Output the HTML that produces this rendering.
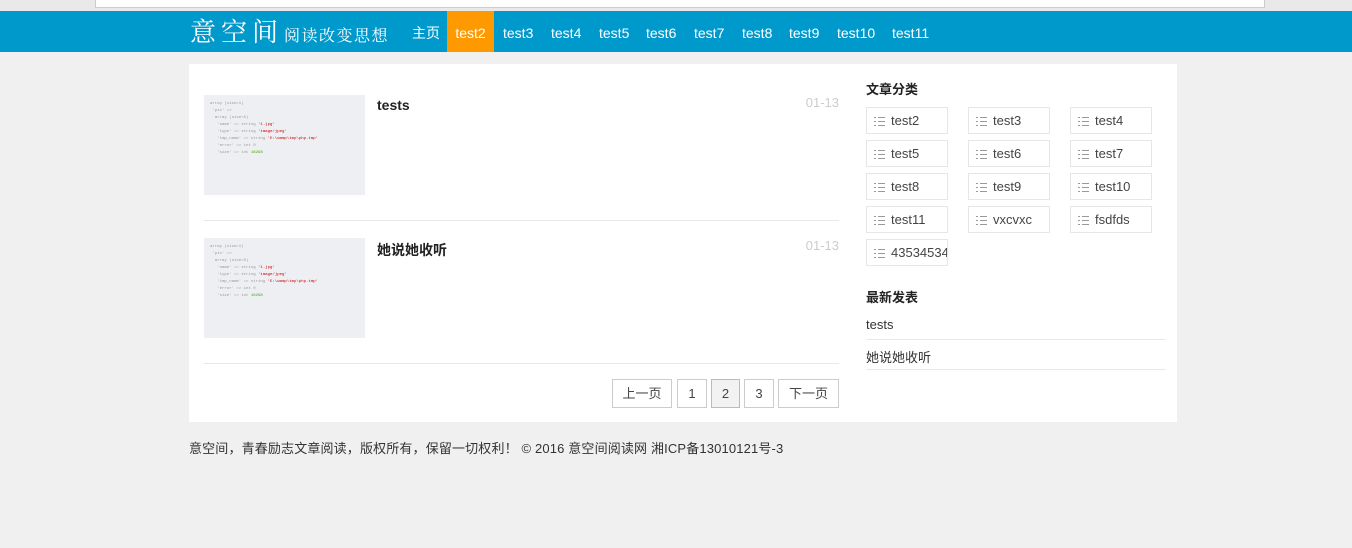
<!DOCTYPE html>
<html><head><meta charset="utf-8"><style>
*{margin:0;padding:0;box-sizing:border-box}
body{width:1352px;height:548px;background:#f0f0f0;font-family:"Liberation Sans","Noto Sans CJK SC",sans-serif;font-size:13px;color:#333;position:relative;overflow:hidden}
.abs{position:absolute}
.chrome{left:0;top:0;width:1352px;height:11px;background:#e9e9e9}
.url{left:95px;top:0;width:1170px;height:8px;background:#fff;border:1px solid #ccc;border-top:none}
.nav{left:0;top:11px;width:1352px;height:41px;background:#0099cc}
.nav a{position:absolute;top:0;height:41px;line-height:44px;color:#fff;font-size:14px;text-decoration:none}
.logo{left:190px;top:12px;color:#fff;font-family:"Noto Serif CJK SC",serif;font-size:26px;letter-spacing:5px}
.slogan{left:284px;top:23px;color:#fff;font-family:"Noto Serif CJK SC",serif;font-size:16px;letter-spacing:1.5px}
.box{left:189px;top:64px;width:988px;height:358px;background:#fff}
.img{background:#eeeff3;width:161px;height:100px}
.img div{font-size:4px;color:#999;line-height:7px;padding:6px 6px;font-family:"Liberation Mono",monospace}
.title{font-weight:bold;font-size:14px;color:#222}
.date{color:#ccc;font-size:13px}
.hr{height:1px;background:#e8e8e8}
.pg{top:379px;height:29px;border:1px solid #ccc;line-height:27px;text-align:center;font-size:13px;color:#444;background:#fff}
.tag{width:82px;height:27px;border:1px solid #e6e6e6;line-height:25px;padding-left:7px;font-size:13px;color:#444;white-space:nowrap;overflow:hidden}
.tag i{display:inline-block;width:11px;height:9px;margin-right:6px;vertical-align:-1px;background:linear-gradient(#999 0 0) 0 0/2px 1px,linear-gradient(#999 0 0) 0 4px/2px 1px,linear-gradient(#999 0 0) 0 8px/2px 1px,linear-gradient(#999 0 0) 4px 0/7px 1px,linear-gradient(#999 0 0) 4px 4px/7px 1px,linear-gradient(#999 0 0) 4px 8px/7px 1px;background-repeat:no-repeat}
.h{font-weight:bold;font-size:13px;color:#222}
</style></head><body>
<div class="abs chrome"></div><div class="abs url"></div>
<div class="abs nav">
<a style="left:412px">主页</a>
<a style="left:447px;width:47px;background:#ff9900;text-align:center">test2</a>
<a style="left:503px">test3</a><a style="left:551px">test4</a><a style="left:599px">test5</a><a style="left:646px">test6</a><a style="left:694px">test7</a><a style="left:742px">test8</a><a style="left:789px">test9</a><a style="left:837px">test10</a><a style="left:892px">test11</a>
</div>
<div class="abs logo">意空间</div>
<div class="abs slogan">阅读改变思想</div>
<div class="abs box"></div>
<div class="abs img" style="left:204px;top:95px"><div>array (size=1)<br>&nbsp;'pic' =&gt;<br>&nbsp;&nbsp;array (size=5)<br>&nbsp;&nbsp;&nbsp;'name' =&gt; string <span style="color:#c00">'1.jpg'</span><br>&nbsp;&nbsp;&nbsp;'type' =&gt; string <span style="color:#c00">'image/jpeg'</span><br>&nbsp;&nbsp;&nbsp;'tmp_name' =&gt; string <span style="color:#c00">'E:\wamp\tmp\php.tmp'</span><br>&nbsp;&nbsp;&nbsp;'error' =&gt; int 0<br>&nbsp;&nbsp;&nbsp;'size' =&gt; int <span style="color:#4a0">16298</span></div></div>
<div class="abs title" style="left:377px;top:97px">tests</div>
<div class="abs date" style="left:803px;top:95px;width:36px;text-align:right">01-13</div>
<div class="abs hr" style="left:204px;top:220px;width:635px"></div>
<div class="abs img" style="left:204px;top:238px"><div>array (size=1)<br>&nbsp;'pic' =&gt;<br>&nbsp;&nbsp;array (size=5)<br>&nbsp;&nbsp;&nbsp;'name' =&gt; string <span style="color:#c00">'1.jpg'</span><br>&nbsp;&nbsp;&nbsp;'type' =&gt; string <span style="color:#c00">'image/jpeg'</span><br>&nbsp;&nbsp;&nbsp;'tmp_name' =&gt; string <span style="color:#c00">'E:\wamp\tmp\php.tmp'</span><br>&nbsp;&nbsp;&nbsp;'error' =&gt; int 0<br>&nbsp;&nbsp;&nbsp;'size' =&gt; int <span style="color:#4a0">16298</span></div></div>
<div class="abs title" style="left:377px;top:240px">她说她收听</div>
<div class="abs date" style="left:803px;top:238px;width:36px;text-align:right">01-13</div>
<div class="abs hr" style="left:204px;top:363px;width:635px"></div>
<div class="abs pg" style="left:612px;width:60px">上一页</div>
<div class="abs pg" style="left:677px;width:30px">1</div>
<div class="abs pg" style="left:711px;width:29px;background:#f2f2f2;border-color:#bbb">2</div>
<div class="abs pg" style="left:744px;width:30px">3</div>
<div class="abs pg" style="left:778px;width:61px">下一页</div>
<div class="abs h" style="left:866px;top:79px">文章分类</div>
<div class="abs tag" style="left:866px;top:107px"><i></i>test2</div>
<div class="abs tag" style="left:968px;top:107px"><i></i>test3</div>
<div class="abs tag" style="left:1070px;top:107px"><i></i>test4</div>
<div class="abs tag" style="left:866px;top:140px"><i></i>test5</div>
<div class="abs tag" style="left:968px;top:140px"><i></i>test6</div>
<div class="abs tag" style="left:1070px;top:140px"><i></i>test7</div>
<div class="abs tag" style="left:866px;top:173px"><i></i>test8</div>
<div class="abs tag" style="left:968px;top:173px"><i></i>test9</div>
<div class="abs tag" style="left:1070px;top:173px"><i></i>test10</div>
<div class="abs tag" style="left:866px;top:206px"><i></i>test11</div>
<div class="abs tag" style="left:968px;top:206px"><i></i>vxcvxc</div>
<div class="abs tag" style="left:1070px;top:206px"><i></i>fsdfds</div>
<div class="abs tag" style="left:866px;top:239px"><i></i>4353453434</div>
<div class="abs h" style="left:866px;top:287px">最新发表</div>
<div class="abs" style="left:866px;top:317px">tests</div>
<div class="abs hr" style="left:866px;top:339px;width:300px"></div>
<div class="abs" style="left:866px;top:347px">她说她收听</div>
<div class="abs hr" style="left:866px;top:369px;width:300px"></div>
<div class="abs" style="left:189px;top:438px;font-size:13px;letter-spacing:0.15px">意空间，青春励志文章阅读，版权所有，保留一切权利！ © 2016 意空间阅读网 湘ICP备13010121号-3</div>
</body></html>
